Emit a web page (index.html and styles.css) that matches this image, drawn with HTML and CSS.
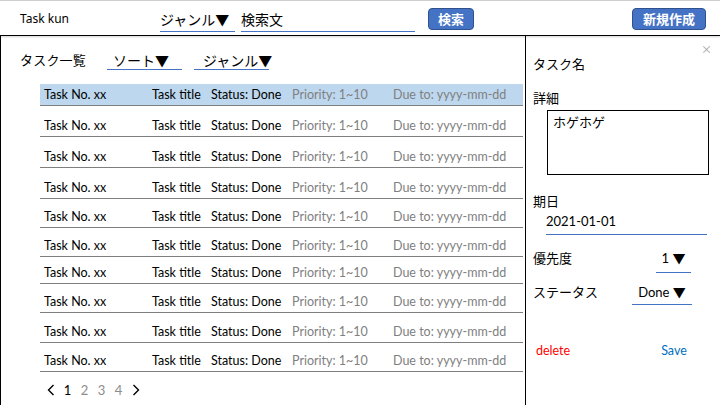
FILE: index.html
```html
<!DOCTYPE html>
<html lang="ja">
<head>
<meta charset="utf-8">
<title>Task kun</title>
<link rel="stylesheet" href="styles.css">
</head>
<body>
<div class="app">
  <header class="topbar">
    <div class="brand">Task kun</div>
    <div class="field genre-select">ジャンル▼</div>
    <div class="field search-input">検索文</div>
    <button class="btn search-btn">検索</button>
    <div class="spacer"></div>
    <button class="btn new-btn">新規作成</button>
  </header>
  <main class="main">
    <section class="list-panel">
      <div class="toolbar">
        <div class="list-title">タスク一覧</div>
        <div class="field sort-select">ソート▼</div>
        <div class="field list-genre">ジャンル▼</div>
      </div>
      <ul class="task-list">
        <li class="task selected"><span>Task No. xx</span><span>Task title</span><span>Status: Done</span><span class="muted">Priority: 1~10</span><span class="muted">Due to: yyyy-mm-dd</span></li>
        <li class="task"><span>Task No. xx</span><span>Task title</span><span>Status: Done</span><span class="muted">Priority: 1~10</span><span class="muted">Due to: yyyy-mm-dd</span></li>
        <li class="task"><span>Task No. xx</span><span>Task title</span><span>Status: Done</span><span class="muted">Priority: 1~10</span><span class="muted">Due to: yyyy-mm-dd</span></li>
        <li class="task"><span>Task No. xx</span><span>Task title</span><span>Status: Done</span><span class="muted">Priority: 1~10</span><span class="muted">Due to: yyyy-mm-dd</span></li>
        <li class="task"><span>Task No. xx</span><span>Task title</span><span>Status: Done</span><span class="muted">Priority: 1~10</span><span class="muted">Due to: yyyy-mm-dd</span></li>
        <li class="task"><span>Task No. xx</span><span>Task title</span><span>Status: Done</span><span class="muted">Priority: 1~10</span><span class="muted">Due to: yyyy-mm-dd</span></li>
        <li class="task"><span>Task No. xx</span><span>Task title</span><span>Status: Done</span><span class="muted">Priority: 1~10</span><span class="muted">Due to: yyyy-mm-dd</span></li>
        <li class="task"><span>Task No. xx</span><span>Task title</span><span>Status: Done</span><span class="muted">Priority: 1~10</span><span class="muted">Due to: yyyy-mm-dd</span></li>
        <li class="task"><span>Task No. xx</span><span>Task title</span><span>Status: Done</span><span class="muted">Priority: 1~10</span><span class="muted">Due to: yyyy-mm-dd</span></li>
        <li class="task"><span>Task No. xx</span><span>Task title</span><span>Status: Done</span><span class="muted">Priority: 1~10</span><span class="muted">Due to: yyyy-mm-dd</span></li>
      </ul>
      <nav class="pager">
        <span class="page"><svg width="8" height="12" viewBox="0 0 8 12"><polyline points="6.5,1 1.5,6 6.5,11" fill="none" stroke="#000" stroke-width="1.4"/></svg></span>
        <span class="page current">1</span>
        <span class="page">2</span>
        <span class="page">3</span>
        <span class="page">4</span>
        <span class="page"><svg width="8" height="12" viewBox="0 0 8 12"><polyline points="1.5,1 6.5,6 1.5,11" fill="none" stroke="#000" stroke-width="1.4"/></svg></span>
      </nav>
    </section>
    <aside class="detail">
      <div class="close">×</div>
      <div class="d-title">タスク名</div>
      <div class="d-label first-label">詳細</div>
      <div class="d-text">ホゲホゲ</div>
      <div class="d-label due-label">期日</div>
      <div class="d-date">2021-01-01</div>
      <div class="d-row prio-row">
        <span class="d-row-label">優先度</span>
        <span class="field prio-select">1 ▼</span>
      </div>
      <div class="d-row status-row">
        <span class="d-row-label">ステータス</span>
        <span class="field status-select">Done ▼</span>
      </div>
      <div class="d-actions">
        <span class="delete">delete</span>
        <span class="save">Save</span>
      </div>
    </aside>
  </main>
</div>
</body>
</html>
```

FILE: styles.css
```css
* { box-sizing: border-box; }
html, body { margin: 0; padding: 0; background: #fff; }
body {
  font-family: "Lato", "Noto Sans CJK JP", sans-serif;
  color: #000;
}
.app {
  width: 720px;
  height: 405px;
  display: flex;
  flex-direction: column;
  overflow: hidden;
}
.topbar {
  height: 36px;
  flex: 0 0 36px;
  display: flex;
  align-items: center;
  border-top: 1px solid #cfcfcf;
  border-bottom: 1px solid #000;
  box-shadow: 0 1px 2px rgba(0,0,0,0.18);
  position: relative;
  z-index: 1;
  padding-left: 20px;
}
.brand {
  width: 140px;
  flex-shrink: 0;
  font-size: 12px;
  font-family: "Noto Sans", sans-serif;
}
.field {
  border-bottom: 1px solid #4472c4;
  font-family: "Noto Sans CJK JP", sans-serif;
  white-space: nowrap;
  flex-shrink: 0;
}
.genre-select {
  width: 75px;
  font-size: 14px;
  line-height: 20px;
  margin-top: 4px;
  padding-bottom: 2px;
}
.search-input {
  width: 174px;
  margin-left: 6px;
  font-size: 14px;
  line-height: 20px;
  margin-top: 4px;
  padding-bottom: 2px;
}
.btn {
  height: 22px;
  flex-shrink: 0;
  background: #4472c4;
  border: 1px solid #2f528f;
  border-radius: 4px;
  color: #fff;
  font-family: "Noto Sans CJK JP", sans-serif;
  font-weight: bold;
  font-size: 13px;
  line-height: 18px;
  padding: 0;
  margin-top: 1px;
}
.search-btn { width: 46px; margin-left: 13px; }
.spacer { flex: 1; }
.new-btn { width: 74px; margin-right: 14px; }

.main {
  flex: 1;
  display: flex;
  min-height: 0;
}
.list-panel {
  flex: 0 0 526px;
  border-left: 1px solid #000;
  border-right: 1px solid #000;
  display: flex;
  flex-direction: column;
}
.toolbar {
  display: flex;
  align-items: flex-start;
  margin-top: 15px;
  padding-left: 19px;
  height: 19px;
}
.list-title {
  width: 66px;
  flex-shrink: 0;
  white-space: nowrap;
  font-family: "Noto Sans CJK JP", sans-serif;
  font-size: 13px;
  letter-spacing: 0.2px;
  line-height: 18px;
}
.sort-select, .list-genre {
  width: 75px;
  font-size: 14px;
  line-height: 18px;
}
.sort-select { margin-left: 21px; padding-left: 6px; }
.list-genre { margin-left: 12px; padding-left: 9px; }

.task-list {
  list-style: none;
  margin: 14px 2px 0 39px;
  padding: 0;
}
.task {
  display: grid;
  grid-template-columns: 108px 59px 81px 101px auto;
  height: 22px;
  line-height: 21px;
  padding-left: 4px;
  font-size: 12.5px;
  border-bottom: 1px solid #7f7f7f;
  margin-top: 7.5px;
  white-space: nowrap;
}
.task:first-child { margin-top: 0; }
.task:nth-child(2) { margin-top: 9.3px; }
.task:nth-child(3) { margin-top: 9px; }
.task:nth-child(4) { margin-top: 8.7px; }
.task:nth-child(5) { margin-top: 7.3px; }
.task:nth-child(6) { margin-top: 6.4px; }
.task:nth-child(7) { margin-top: 5.3px; }
.task:nth-child(8) { margin-top: 7.3px; }
.task:nth-child(9) { margin-top: 8px; }
.task:nth-child(10) { margin-top: 6.4px; }
.task.selected { background: #bdd7ee; }
.muted { color: #808080; }

.pager {
  display: flex;
  align-items: center;
  margin: 9px 0 0 41px;
  height: 18px;
  font-size: 13px;
}
.page {
  width: 17px;
  text-align: center;
  color: #8c8c8c;
  display: flex;
  justify-content: center;
  align-items: center;
}
.page.current { color: #000; }

.detail {
  flex: 1;
  display: flex;
  flex-direction: column;
  padding-left: 7px;
  font-family: "Noto Sans CJK JP", sans-serif;
  font-size: 13px;
}
.close {
  align-self: flex-end;
  margin: 7px 8px 0 0;
  height: 12px;
  line-height: 12px;
  font-size: 11px;
  color: #a0a0a0;
}
.d-title { line-height: 18px; }
.d-label { line-height: 18px; }
.first-label { margin-top: 16px; }
.d-text {
  margin: 3px 0 0 14px;
  width: 162px;
  height: 65px;
  border: 1px solid #000;
  padding: 1px 5px;
  line-height: 20px;
}
.due-label { margin-top: 17px; }
.d-date {
  margin-left: 13px;
  width: 161px;
  line-height: 22px;
  padding-bottom: 2px;
  border-bottom: 1px solid #4472c4;
  font-family: "Lato", sans-serif;
}
.d-row {
  display: flex;
  align-items: flex-start;
  line-height: 20px;
}
.d-row-label { width: 0; white-space: nowrap; }
.prio-row { margin-top: 13px; }
.prio-select {
  margin-left: 123px;
  width: 35px;
  text-align: center;
  padding-bottom: 4px;
  font-family: "Lato", "Noto Sans CJK JP", sans-serif;
}
.status-row { margin-top: 9px; }
.status-select {
  margin-left: 99px;
  width: 60px;
  text-align: center;
  padding-bottom: 2px;
  font-family: "Lato", "Noto Sans CJK JP", sans-serif;
}
.d-actions {
  display: flex;
  margin-top: 37px;
  line-height: 18px;
  font-family: "Lato", sans-serif;
  font-size: 12.5px;
}
.delete { color: #ff0000; margin-left: 3px; }
.save { color: #0070c0; margin-left: 91px; }
```
